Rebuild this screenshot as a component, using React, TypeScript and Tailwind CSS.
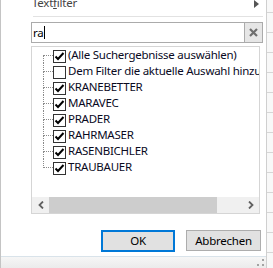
import React from 'react';

const items = [
  { label: '(Alle Suchergebnisse auswählen)', checked: true },
  { label: 'Dem Filter die aktuelle Auswahl hinzufügen', checked: false },
  { label: 'KRANEBETTER', checked: true },
  { label: 'MARAVEC', checked: true },
  { label: 'PRADER', checked: true },
  { label: 'RAHRMASER', checked: true },
  { label: 'RASENBICHLER', checked: true },
  { label: 'TRAUBAUER', checked: true },
];

const Checkbox = ({ checked }: { checked: boolean }) => (
  <div className="w-[13px] h-[13px] mt-[3px] shrink-0 border border-[#333333] bg-white flex items-center justify-center">
    {checked && (
      <svg width="11" height="11" viewBox="0 0 11 11">
        <path d="M1.5 5.5 L4 8 L9.5 2" stroke="#000" strokeWidth="2" fill="none" />
      </svg>
    )}
  </div>
);

const GridTicks = () => (
  <div className="w-[6px] bg-[#f8f8f8] flex flex-col pt-[12px] gap-[19px]">
    {Array.from({ length: 13 }).map((_, i) => (
      <div key={i} className="h-px bg-[#d6d6d6]" />
    ))}
  </div>
);

export default function App() {
  return (
    <div className="w-[273px] h-[268px] flex bg-white overflow-hidden text-[11.5px] tracking-[-0.25px] text-black font-['Noto_Sans','Liberation_Sans',sans-serif]">
      <div className="w-px bg-[#c4c4c4]" />
      <div className="flex-1 flex flex-col min-w-0">
        {/* Textfilter menu item, partly scrolled out at the top */}
        <div className="-mt-[5px] h-[16px] pl-[31px] pr-[7px] flex items-center justify-between text-[#444444] leading-[16px]">
          <span>
            Text<span className="underline">f</span>ilter
          </span>
          <svg width="5" height="8" viewBox="0 0 5 8" className="mt-[1px]">
            <path d="M0 0 L5 4 L0 8 Z" fill="#555" />
          </svg>
        </div>
        <div className="mt-[5px] ml-[32px] mr-[3px] h-px bg-[#e2e2e2]" />

        {/* Search */}
        <div className="mt-[5px] ml-[30px] mr-[3px] h-[21px] border border-[#ababab] flex">
          <div className="flex-1 flex items-center pl-[1px]">
            <span className="leading-[19px]">ra</span>
            <div className="w-px h-[13px] bg-black ml-px" />
          </div>
          <div className="w-[18px] bg-[#e6e6e6] border-l border-[#ababab] flex items-center justify-center">
            <svg width="9" height="9" viewBox="0 0 9 9">
              <path d="M1 1 L8 8 M8 1 L1 8" stroke="#6e6e6e" strokeWidth="2.2" />
            </svg>
          </div>
        </div>

        {/* Tree */}
        <div className="mt-[3px] ml-[30px] w-[229px] h-[168px] border border-[#d5d5d5] flex flex-col">
          <div className="flex-1 flex flex-col overflow-hidden">
            {items.map((it, i) => (
              <div key={it.label} className="h-[16px] flex items-start pl-[11px] shrink-0">
                <div className="w-[10px] h-[16px] flex flex-col shrink-0">
                  <div
                    className={
                      i > 0
                        ? 'h-[9px] border-b border-l border-dotted border-[#8a8a8a]'
                        : 'h-[9px] border-b border-dotted border-[#8a8a8a]'
                    }
                  />
                  <div className={i < items.length - 1 ? 'flex-1 border-l border-dotted border-[#8a8a8a]' : 'flex-1'} />
                </div>
                <Checkbox checked={it.checked} />
                <span className="ml-[2px] leading-[16px] whitespace-nowrap text-[#0a0a1e]">{it.label}</span>
              </div>
            ))}
          </div>
          {/* horizontal scrollbar */}
          <div className="h-[16px] bg-[#f0f0f0] flex items-center">
            <div className="w-[17px] h-full flex items-center justify-center">
              <svg width="6" height="8" viewBox="0 0 6 8">
                <path d="M5 0.5 L1.5 4 L5 7.5" stroke="#606060" strokeWidth="1.8" fill="none" />
              </svg>
            </div>
            <div className="w-[168px] h-full bg-[#cdcdcd]" />
            <div className="flex-1" />
            <div className="w-[17px] h-full flex items-center justify-center">
              <svg width="6" height="8" viewBox="0 0 6 8">
                <path d="M1 0.5 L4.5 4 L1 7.5" stroke="#606060" strokeWidth="1.8" fill="none" />
              </svg>
            </div>
          </div>
        </div>

        {/* Buttons */}
        <div className="mt-[16px] pr-[5px] flex justify-end items-start gap-[11px]">
          <button className="w-[74px] h-[22px] border-2 border-[#0078d7] bg-[#e1e1e1] leading-[18px]">OK</button>
          <button className="w-[75px] h-[21px] border border-[#adadad] bg-[#e1e1e1] leading-[19px]">Abbrechen</button>
        </div>

        {/* Status / resize bar */}
        <div className="mt-[4px] h-px bg-[#d9e3ea]" />
        <div className="flex-1 bg-gradient-to-b from-[#f6f6f6] to-[#ebebeb] flex justify-end items-end pr-[2px] pb-[2px]">
          <svg width="7" height="7" viewBox="0 0 7 7">
            <rect x="5" y="0" width="2" height="2" fill="#a3a3a3" />
            <rect x="0" y="5" width="2" height="2" fill="#a3a3a3" />
            <rect x="5" y="5" width="2" height="2" fill="#a3a3a3" />
          </svg>
        </div>
      </div>
      <div className="w-px bg-[#cfcfcf]" />
      <GridTicks />
    </div>
  );
}
